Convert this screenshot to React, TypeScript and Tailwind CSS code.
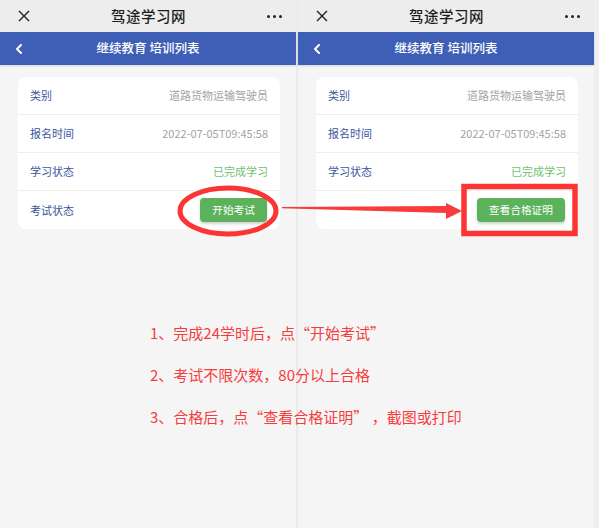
import React from "react";

const FONT = { fontFamily: '"Noto Sans CJK SC", "Noto Sans", sans-serif' };

interface Row {
  label: string;
  value?: string;
  tone?: "gray" | "green";
}

const rows: Row[] = [
  { label: "类别", value: "道路货物运输驾驶员", tone: "gray" },
  { label: "报名时间", value: "2022-07-05T09:45:58", tone: "gray" },
  { label: "学习状态", value: "已完成学习", tone: "green" },
];

function CloseIcon() {
  return (
    <svg width="12" height="12" viewBox="0 0 12 12" className="text-[#1f1f1f]">
      <path d="M1 1 L11 11 M11 1 L1 11" stroke="currentColor" strokeWidth="1.4" fill="none" />
    </svg>
  );
}

function Dots() {
  return (
    <div className="flex items-center gap-[3px]">
      <span className="w-[3px] h-[3px] rounded-full bg-[#222]" />
      <span className="w-[3px] h-[3px] rounded-full bg-[#222]" />
      <span className="w-[3px] h-[3px] rounded-full bg-[#222]" />
    </div>
  );
}

function Phone({ showExamLabel, buttonText }: { showExamLabel: boolean; buttonText: string }) {
  return (
    <div className="w-[296px] h-full flex flex-col bg-[#f5f5f5]">
      {/* top wechat bar */}
      <div className="h-[32px] bg-[#ededed] flex items-center justify-between pl-[18px] pr-[14px]">
        <CloseIcon />
        <span className="text-[14.5px] font-medium text-[#1c1c1c] tracking-[0.5px]">驾途学习网</span>
        <Dots />
      </div>

      {/* blue nav bar */}
      <div className="h-[33px] bg-[#3f5fb6] relative flex items-center justify-center shadow-[0_1px_2px_rgba(0,0,0,0.15)]">
        <svg width="8" height="10" viewBox="0 0 8 10" className="absolute left-[15px] top-[12px]">
          <path d="M6 1 L2 5 L6 9" stroke="white" strokeWidth="2" fill="none" strokeLinecap="round" strokeLinejoin="round" />
        </svg>
        <span className="text-[12.5px] font-medium text-white">继续教育 培训列表</span>
      </div>

      {/* card */}
      <div className="mt-[12px] ml-[18px] w-[262px] bg-white rounded-[8px] flex flex-col">
        {rows.map((r) => (
          <div key={r.label} className="h-[38px] px-[12px] flex items-center justify-between border-b border-[#eeeeee]">
            <span className="text-[11px] text-[#3b56a0]">{r.label}</span>
            <span className={r.tone === "green" ? "text-[11px] text-[#6fc16f]" : "text-[11px] text-[#a3a3a3]"}>
              {r.value}
            </span>
          </div>
        ))}
        <div className="h-[38px] pl-[12px] pr-[13px] flex items-center justify-between">
          <span className="text-[11px] text-[#3b56a0]">{showExamLabel ? "考试状态" : ""}</span>
          <button className="h-[24px] px-[12px] rounded-[4px] bg-[#5bb25b] text-white text-[10.7px] shadow-[0_2px_3px_rgba(0,0,0,0.18)]">
            {buttonText}
          </button>
        </div>
      </div>
    </div>
  );
}

export default function App() {
  return (
    <div className="relative w-[599px] h-[528px] overflow-hidden bg-[#f5f5f5] flex" style={FONT}>
      <Phone showExamLabel buttonText="开始考试" />
      <div className="w-[2px] h-full bg-[#ebebeb]" />
      <Phone showExamLabel={false} buttonText="查看合格证明" />
      <div className="flex-1 h-full bg-[#efefef]" />

      {/* annotations over the screenshots */}
      <svg className="absolute left-0 top-0 pointer-events-none" width="599" height="528" viewBox="0 0 599 528">
        <ellipse cx="228" cy="211" rx="48" ry="23" fill="none" stroke="#fb3434" strokeWidth="5" />
        <polygon points="282,207 446,206 446,203 462,211 446,219 446,213 282,208.2" fill="#f83b3b" />
        <rect x="464" y="186.5" width="111" height="47" fill="none" stroke="#fb3434" strokeWidth="5.5" />
      </svg>
      <div className="absolute left-[150px] top-[322px] flex flex-col gap-[20px] text-[15px] leading-[22px] text-[#f63d3d]">
        <p>1、完成24学时后，点“开始考试”</p>
        <p>2、考试不限次数，80分以上合格</p>
        <p>3、合格后，点“查看合格证明” ，截图或打印</p>
      </div>
    </div>
  );
}
